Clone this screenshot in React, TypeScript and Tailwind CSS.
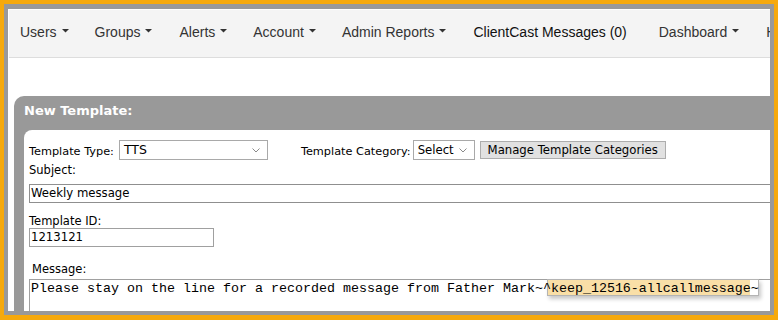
import React from 'react';

const navItems = [
  { label: 'Users', caret: true, pr: 'pr-[15px]' },
  { label: 'Groups', caret: true, pr: 'pr-[16px]' },
  { label: 'Alerts', caret: true, pr: 'pr-[15px]' },
  { label: 'Account', caret: true, pr: 'pr-[15px]' },
  { label: 'Admin Reports', caret: true, pr: 'pr-[16px]' },
  { label: 'ClientCast Messages (0)', caret: false, pr: 'pr-[21px]' },
  { label: 'Dashboard', caret: true, pr: 'pr-[16px]' },
  { label: 'Help', caret: true, pr: 'pr-[15px]' },
];

function Caret() {
  return (
    <svg width="7" height="4" viewBox="0 0 7 4" className="ml-[5px] mt-[5px] shrink-0">
      <polygon points="0,0 7,0 3.5,3.6" fill="#333" />
    </svg>
  );
}

function Chevron() {
  return (
    <svg width="8" height="5" viewBox="0 0 8 5" className="shrink-0">
      <path d="M0.5 0.5 L4 4 L7.5 0.5" fill="none" stroke="#8a8a8a" strokeWidth="1" />
    </svg>
  );
}

function FakeSelect({ value, width, size }: { value: string; width: string; size: string }) {
  return (
    <div
      className={`${width} ${size} h-[20px] border border-[#a9a9a9] bg-white flex items-center justify-between pl-[4px] pr-[7px] leading-[16px] text-black`}
    >
      <span>{value}</span>
      <Chevron />
    </div>
  );
}

export default function App() {
  const font = "font-['DejaVu_Sans',Tahoma,sans-serif]";

  return (
    <div className="w-[778px] h-[320px] bg-[#f6a90c] pt-[4px] px-[4px] pb-[5px]">
      <div className="h-full bg-white border-[#999999] border-t-[5px] border-x-[4px] border-b-[4px] overflow-hidden flex flex-col">
        {/* Top nav */}
        <div className="ml-px mt-px h-[48px] shrink-0 bg-[#f4f4f4] border-b border-[#dddddd] flex items-start pt-[14px] font-['Liberation_Sans',Arial,sans-serif] text-[14px] leading-[16px] whitespace-nowrap">
          {navItems.map((item) => (
            <div
              key={item.label}
              className={`flex items-start shrink-0 pl-[11px] ${item.pr} ${item.caret ? 'text-[#333]' : 'text-[#111]'}`}
            >
              <span>{item.label}</span>
              {item.caret && <Caret />}
            </div>
          ))}
        </div>

        {/* Panel */}
        <div className={`mt-[38px] ml-[6px] w-[900px] shrink-0 bg-[#999999] rounded-tl-[10px] pl-[10px] ${font}`}>
          <div className="h-[34px] pt-[7px] text-white font-bold text-[13px] leading-[15px]">New Template:</div>
          <div className="bg-white rounded-tl-[8px] pl-[5px] pt-[10px] pb-[20px] text-[11.5px] text-black">
            {/* Type & category row */}
            <div className="flex items-center h-[20px]">
              <span className="text-[11.3px] leading-[13px] pt-[2px]">Template Type:</span>
              <div className="ml-[5px]">
                <FakeSelect value="TTS" width="w-[149px]" size="text-[12.5px]" />
              </div>
              <span className="ml-[33px] text-[11.3px] leading-[13px] pt-[2px]">Template Category:</span>
              <div className="ml-[2px]">
                <FakeSelect value="Select" width="w-[62px]" size="text-[11.7px]" />
              </div>
              <button className="ml-[5px] w-[186px] h-[18px] bg-[#e1e1e1] border border-[#adadad] text-[11.7px] leading-[14px] text-black">
                Manage Template Categories
              </button>
            </div>

            {/* Subject */}
            <div className="mt-[4px] leading-[13px]">Subject:</div>
            <div className="mt-[7px] w-[800px] h-[19px] border border-[#8f8f8f] pl-px text-[11.7px] leading-[17px]">
              Weekly message
            </div>

            {/* Template ID */}
            <div className="mt-[12px] leading-[13px]">Template ID:</div>
            <div className="w-[185px] h-[19px] border border-[#a0a0a0] pl-px text-[11.7px] leading-[17px]">
              1213121
            </div>

            {/* Message */}
            <div className="mt-[16px] ml-[3px] leading-[13px]">Message:</div>
            <div className="relative z-0 mt-[3px] w-[800px] h-[60px] border border-[#a0a0a0] pl-px font-['Liberation_Mono','Courier_New',monospace] text-[13.33px] leading-[17px] whitespace-nowrap text-black">
              Please stay on the line for a recorded message from Father Mark~^
              <span className="relative inline-block align-top leading-[17px]">
                <span className="absolute -left-[4px] -top-[1px] right-0 h-[17px] -z-10 border border-[#b4b4b4] bg-white shadow-[2px_3px_4px_rgba(0,0,0,0.22)]">
                  <span className="absolute left-0 top-0 bottom-0 right-[8px] bg-[#f9dfa7]" />
                </span>
                keep_12516-allcallmessage~
              </span>
            </div>
          </div>
        </div>
      </div>
    </div>
  );
}
